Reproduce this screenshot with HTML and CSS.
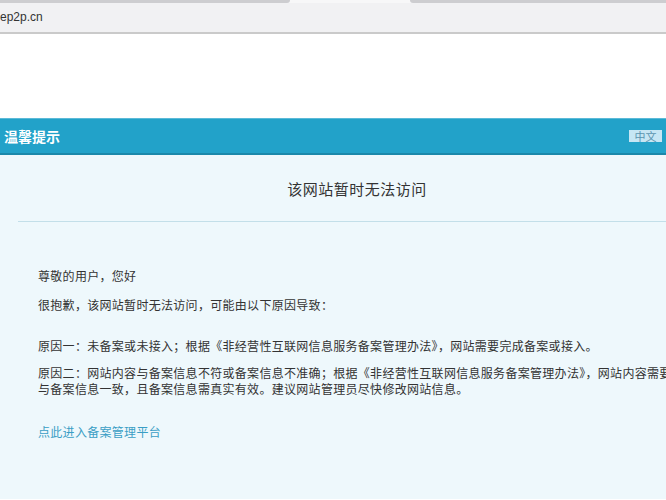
FILE: index.html
```html
<!DOCTYPE html>
<html lang="zh-CN">
<head>
	<meta charset="utf-8">
	<title>温馨提示</title>
	<link rel="stylesheet" href="styles.css">
</head>

<body>
	<div class="chrome">
		<div class="chrome-top">
			<div class="seg seg-left"></div>
			<div class="seg seg-right"></div>
		</div>
		<div class="address">ep2p.cn</div>
	</div>

	<div class="spacer"></div>

	<div class="top-bar">
		<span class="title">温馨提示</span>
		<span class="lang">中文</span>
	</div>

	<div class="content">
		<div class="page">
			<h1>该网站暂时无法访问</h1>
			<div class="divider"></div>

			<div class="text">
				<div class="intro">
					<p>尊敬的用户，您好</p>
					<p>很抱歉，该网站暂时无法访问，可能由以下原因导致：</p>
				</div>

				<div class="reasons">
					<p>原因一：未备案或未接入；根据《非经营性互联网信息服务备案管理办法》，网站需要完成备案或接入。</p>
					<p>原因二：网站内容与备案信息不符或备案信息不准确；根据《非经营性互联网信息服务备案管理办法》，网站内容需要<br>与备案信息一致，且备案信息需真实有效。建议网站管理员尽快修改网站信息。</p>
				</div>

				<a class="link" href="#">点此进入备案管理平台</a>
			</div>
		</div>
	</div>
</body>
</html>
```

FILE: styles.css
```css
html, body {
	margin: 0;
	padding: 0;
}

body {
	background: #fff;
	overflow: hidden;
	font-family: "Noto Sans CJK SC", "Liberation Sans", sans-serif;
	color: #333;
}

/* browser bar at the top of the shot */
.chrome {
	background: #f1f1f3;
	border-bottom: 2px solid #cacaca;
}

.chrome-top {
	display: flex;
	gap: 120px;
	height: 3px;
	background: #f7f7f8;
}

.seg {
	background: #cdcdd0;
}

.seg-left {
	width: 290px;
	border-radius: 0 0 3px 0;
}

.seg-right {
	flex: 1;
	border-radius: 0 0 0 3px;
}

.address {
	height: 29px;
	line-height: 28px;
	font-family: "Liberation Sans", sans-serif;
	font-size: 12px;
	color: #333;
}

.spacer {
	height: 84px;
}

/* blue title bar */
.top-bar {
	display: flex;
	align-items: center;
	justify-content: space-between;
	height: 34px;
	background: #22a2c9;
	border-top: 1px solid #5bbad8;
	border-bottom: 2px solid #1b88aa;
}

.title {
	padding-left: 4px;
	font-size: 14px;
	font-weight: bold;
	color: #fff;
}

.lang {
	width: 33px;
	height: 12px;
	margin-right: 4px;
	line-height: 12px;
	font-size: 11px;
	text-align: center;
	background: #c6e6f4;
	color: #5b95b0;
}

/* main panel */
.content {
	background: #eef8fc;
	height: 344px;
}

.page {
	width: 714px;
	padding-top: 22px;
}

h1 {
	margin: 0;
	font-size: 15px;
	font-weight: normal;
	letter-spacing: 0.5px;
	line-height: 24px;
	text-align: center;
	color: #333;
}

.divider {
	margin: 20px 0 0 18px;
	border-top: 1px solid #c3dfe9;
}

.text {
	padding: 46px 0 0 38px;
	font-size: 12px;
	line-height: 16px;
	letter-spacing: 0.3px;
	white-space: nowrap;
}

.text p {
	margin: 0 0 13px;
}

.text p:last-child {
	margin-bottom: 0;
}

.intro {
	margin-bottom: 25px;
}

.reasons p {
	margin-bottom: 11px;
}

.reasons {
	margin-bottom: 27px;
}

.link {
	color: #3a9ec5;
	text-decoration: none;
}
```
